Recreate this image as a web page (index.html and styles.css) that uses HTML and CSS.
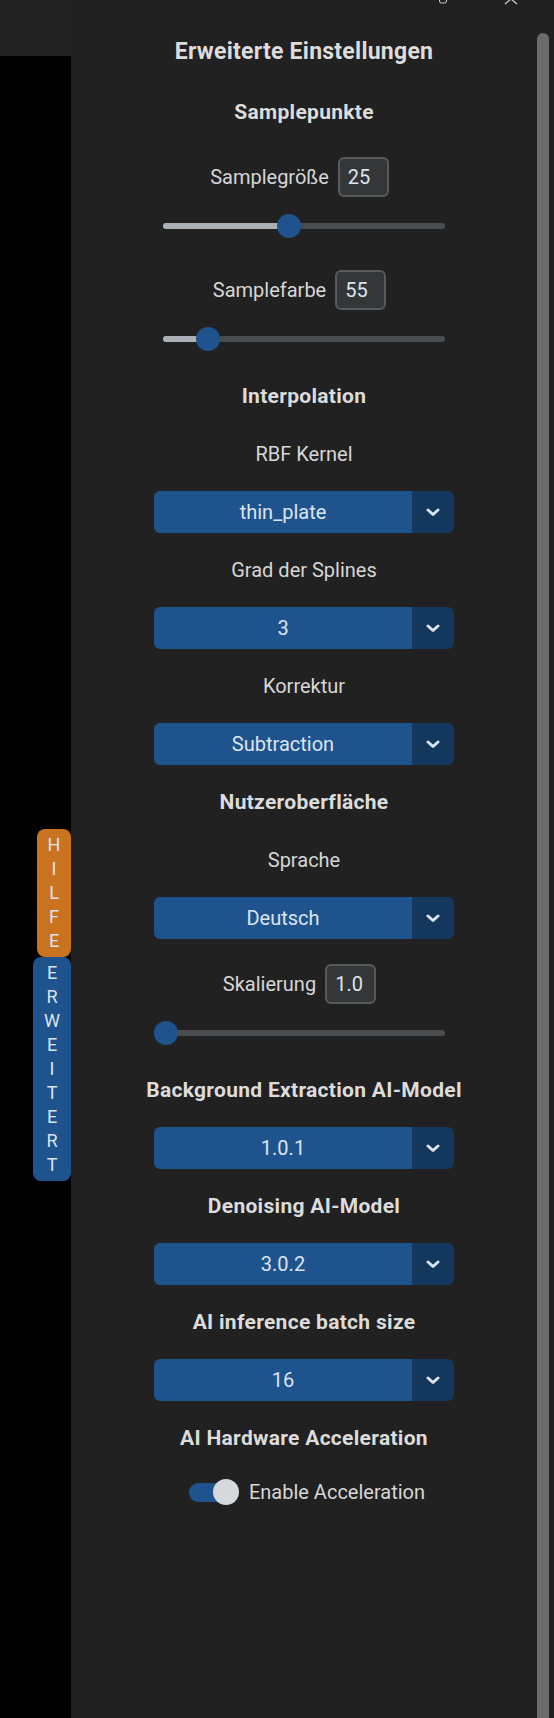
FILE: index.html
```html
<!DOCTYPE html>
<html lang="de">
<head>
<meta charset="utf-8">
<title>Erweiterte Einstellungen</title>
<link rel="stylesheet" href="styles.css">
</head>
<body>
<div class="app">
  <aside class="sidebar">
    <div class="sidebar-top"></div>
    <div class="sidebar-body">
      <div class="tab tab-help">
        <span>H</span><span>I</span><span>L</span><span>F</span><span>E</span>
      </div>
      <div class="tab tab-adv">
        <span>E</span><span>R</span><span>W</span><span>E</span><span>I</span><span>T</span><span>E</span><span>R</span><span>T</span>
      </div>
    </div>
  </aside>

  <main class="panel">
    <svg class="win-icons" width="100" height="8" viewBox="0 0 100 8">
      <path d="M0.5 -8 V1 A2 2 0 0 0 2.5 3 H5.5 A2 2 0 0 0 7.5 1 V-8" fill="none" stroke="#d0d0d0" stroke-width="1"/>
      <path d="M9 -8 V0" fill="none" stroke="#d0d0d0" stroke-width="1"/>
      <path d="M66 -6 L78 4 M78 -6 L66 4" fill="none" stroke="#d0d0d0" stroke-width="1.2"/>
    </svg>

    <div class="content">
      <div class="title">Erweiterte Einstellungen</div>

      <div class="heading">Samplepunkte</div>
      <div class="field-row">
        <span class="label">Samplegröße</span>
        <span class="entry">25</span>
      </div>
      <div class="slider">
        <div class="track"><div class="fill" style="width:126px"></div></div>
        <div class="knob" style="left:135px"></div>
      </div>
      <div class="field-row">
        <span class="label">Samplefarbe</span>
        <span class="entry">55</span>
      </div>
      <div class="slider">
        <div class="track"><div class="fill" style="width:45px"></div></div>
        <div class="knob" style="left:54px"></div>
      </div>

      <div class="heading">Interpolation</div>
      <div class="label">RBF Kernel</div>
      <div class="select">
        <span class="select-value">thin_plate</span>
        <span class="select-btn"><svg width="14" height="9" viewBox="0 0 14 9"><path d="M2 2 L7 6.5 L12 2" fill="none" stroke="#dce4ee" stroke-width="3" stroke-linejoin="round" stroke-linecap="round"/></svg></span>
      </div>
      <div class="label">Grad der Splines</div>
      <div class="select">
        <span class="select-value">3</span>
        <span class="select-btn"><svg width="14" height="9" viewBox="0 0 14 9"><path d="M2 2 L7 6.5 L12 2" fill="none" stroke="#dce4ee" stroke-width="3" stroke-linejoin="round" stroke-linecap="round"/></svg></span>
      </div>
      <div class="label">Korrektur</div>
      <div class="select">
        <span class="select-value">Subtraction</span>
        <span class="select-btn"><svg width="14" height="9" viewBox="0 0 14 9"><path d="M2 2 L7 6.5 L12 2" fill="none" stroke="#dce4ee" stroke-width="3" stroke-linejoin="round" stroke-linecap="round"/></svg></span>
      </div>

      <div class="heading">Nutzeroberfläche</div>
      <div class="label">Sprache</div>
      <div class="select">
        <span class="select-value">Deutsch</span>
        <span class="select-btn"><svg width="14" height="9" viewBox="0 0 14 9"><path d="M2 2 L7 6.5 L12 2" fill="none" stroke="#dce4ee" stroke-width="3" stroke-linejoin="round" stroke-linecap="round"/></svg></span>
      </div>
      <div class="field-row">
        <span class="label">Skalierung</span>
        <span class="entry">1.0</span>
      </div>
      <div class="slider">
        <div class="track"><div class="fill" style="width:0px"></div></div>
        <div class="knob" style="left:12px"></div>
      </div>

      <div class="heading">Background Extraction AI-Model</div>
      <div class="select">
        <span class="select-value">1.0.1</span>
        <span class="select-btn"><svg width="14" height="9" viewBox="0 0 14 9"><path d="M2 2 L7 6.5 L12 2" fill="none" stroke="#dce4ee" stroke-width="3" stroke-linejoin="round" stroke-linecap="round"/></svg></span>
      </div>

      <div class="heading">Denoising AI-Model</div>
      <div class="select">
        <span class="select-value">3.0.2</span>
        <span class="select-btn"><svg width="14" height="9" viewBox="0 0 14 9"><path d="M2 2 L7 6.5 L12 2" fill="none" stroke="#dce4ee" stroke-width="3" stroke-linejoin="round" stroke-linecap="round"/></svg></span>
      </div>

      <div class="heading">AI inference batch size</div>
      <div class="select">
        <span class="select-value">16</span>
        <span class="select-btn"><svg width="14" height="9" viewBox="0 0 14 9"><path d="M2 2 L7 6.5 L12 2" fill="none" stroke="#dce4ee" stroke-width="3" stroke-linejoin="round" stroke-linecap="round"/></svg></span>
      </div>

      <div class="heading">AI Hardware Acceleration</div>
      <div class="switch-row">
        <span class="switch"><span class="switch-track"></span><span class="switch-knob"></span></span>
        <span class="label">Enable Acceleration</span>
      </div>
    </div>

    <div class="scroll"><div class="thumb"></div></div>
  </main>
</div>
</body>
</html>
```

FILE: styles.css
```css
* { box-sizing: border-box; }

html, body {
  margin: 0;
  padding: 0;
  background: #000;
}

body {
  width: 554px;
  height: 1718px;
  overflow: hidden;
  font-family: Roboto, "Liberation Sans", sans-serif;
  color: #d6d6d6;
}

.app {
  display: flex;
  height: 1718px;
}

/* ---------- left side ---------- */
.sidebar {
  width: 71px;
  display: flex;
  flex-direction: column;
}

.sidebar-top {
  height: 56px;
  background: #232323;
}

.sidebar-body {
  flex: 1;
  background: #000;
  display: flex;
  flex-direction: column;
  align-items: flex-end;
  padding-top: 773px;
}

.tab {
  display: flex;
  flex-direction: column;
  align-items: center;
  padding: 4px 0;
  border-radius: 8px;
  color: #dce4ee;
  font-size: 18px;
  line-height: 24px;
}

.tab-help {
  width: 34px;
  background: #c97320;
}

.tab-adv {
  width: 38px;
  background: #1f538d;
}

/* ---------- panel ---------- */
.panel {
  flex: 1;
  display: flex;
  background: #212121;
  position: relative;
}

.win-icons {
  position: absolute;
  top: 0;
  left: 368px;
}

.content {
  flex: 1;
  display: flex;
  flex-direction: column;
  align-items: center;
  gap: 25px;
  padding-top: 38px;
}

.scroll {
  width: 17px;
  padding-top: 33px;
  padding-right: 5px;
}

.thumb {
  height: 100%;
  background: #6b6b6b;
  border-radius: 6px 6px 0 0;
}

.title {
  font-size: 23px;
  font-weight: 700;
  line-height: 28px;
  letter-spacing: 0.25px;
  color: #dcdcdc;
}

.heading {
  font-size: 21px;
  font-weight: 700;
  line-height: 24px;
  letter-spacing: 0.3px;
  color: #dcdcdc;
}

.label {
  font-size: 20px;
  line-height: 24px;
  color: #d6d6d6;
}

/* spacing adjustments */
.title + .heading { margin-top: 9px; }
.heading + .label { margin-top: 9px; }
.heading + .field-row { margin-top: 8px; }
.field-row + .slider { margin-top: -8px; }
.slider + .field-row { margin-top: 7px; }
.slider + .heading { margin-top: 8px; }
.heading + .switch-row { margin-top: 4px; }

/* entry row */
.field-row {
  display: flex;
  align-items: center;
  gap: 9px;
  padding-right: 9px;
}

.entry {
  width: 51px;
  height: 40px;
  border: 2px solid #565b5e;
  border-radius: 6px;
  background: #343638;
  color: #dce4ee;
  font-size: 20px;
  padding-left: 8px;
  display: flex;
  align-items: center;
}

/* slider */
.slider {
  width: 300px;
  height: 24px;
  position: relative;
  display: flex;
  align-items: center;
  justify-content: center;
}

.track {
  width: 282px;
  height: 6px;
  border-radius: 3px;
  background: #4a4d50;
  overflow: hidden;
}

.fill {
  height: 100%;
  background: #aab0b5;
}

.knob {
  position: absolute;
  top: 0;
  width: 24px;
  height: 24px;
  margin-left: -12px;
  border-radius: 50%;
  background: #1f538d;
}

/* option menu */
.select {
  width: 300px;
  height: 42px;
  display: flex;
  border-radius: 6px;
  overflow: hidden;
}

.select-value {
  flex: 1;
  background: #1f538d;
  display: flex;
  align-items: center;
  justify-content: center;
  color: #dce4ee;
  font-size: 20px;
}

.select-btn {
  width: 42px;
  background: #14375e;
  display: flex;
  align-items: center;
  justify-content: center;
}

/* switch */
.switch-row {
  display: flex;
  align-items: center;
  gap: 10px;
  padding-left: 6px;
}

.switch {
  width: 50px;
  height: 26px;
  position: relative;
  display: flex;
  align-items: center;
}

.switch-track {
  width: 44px;
  height: 19px;
  border-radius: 9px;
  background: #1f538d;
}

.switch-knob {
  position: absolute;
  right: 0;
  top: 0;
  width: 26px;
  height: 26px;
  border-radius: 50%;
  background: #d5d9de;
}
```
